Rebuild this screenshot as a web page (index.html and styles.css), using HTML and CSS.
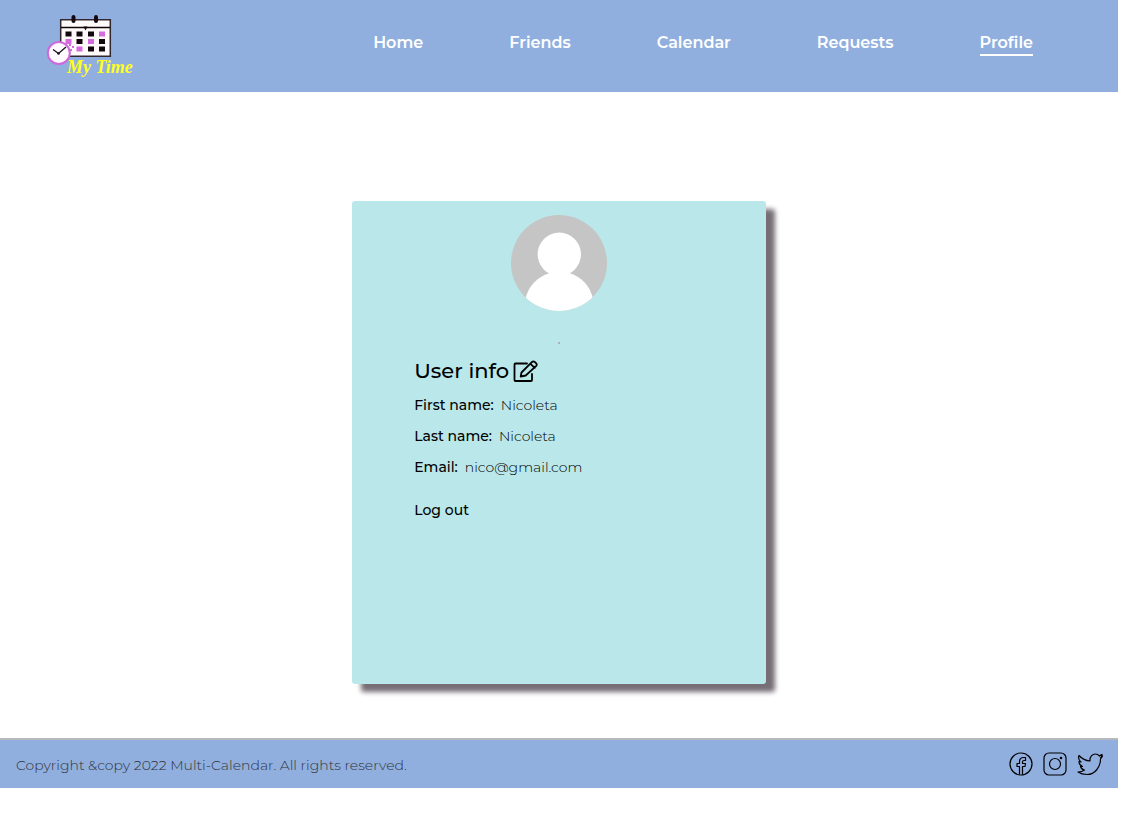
FILE: index.html
```html
<!DOCTYPE html>
<html lang="en">
<head>
<meta charset="utf-8">
<meta name="viewport" content="width=device-width, initial-scale=1">
<title>My Time - Profile</title>
<link rel="stylesheet" href="styles.css">
</head>
<body>
<header class="site-header">
  <a class="logo" href="#" aria-label="My Time">
    <svg width="88" height="68" viewBox="46 14 88 68">
      <path fill="#fffafa" stroke="#33272f" stroke-width="1.5" d="M60.7 19.7h49.6v36.6H60.7z"/>
      <path stroke="#100509" stroke-width="1.5" d="M61 27.5h49"/>
      <path fill="#100509" d="M83.500 26.500h4l-2 4z"/>
      <rect x="71.500" y="15" width="4" height="8" rx="2" fill="#160a10"/>
      <rect x="94" y="15" width="4" height="8" rx="2" fill="#160a10"/>
      <path fill="#12070c" d="M65.500 31.500h6v5h-6zM76.500 31.500h6v5h-6zM88 31.500h6v5h-6zM76.500 39h6v5h-6zM99 39h6v5h-6zM88 46.500h6v5h-6zM99 46.500h6v5h-6z"/>
      <path fill="#d66bdf" d="M99 31.500h6v5h-6zM65.500 39h6v5h-6zM88 39h6v5h-6zM76.500 46.500h6v5h-6zM69 44h2v2h-2zM72 46h2v2h-2zM70 49h2v2h-2z"/>
      <circle cx="58.800" cy="53" r="11" fill="#fffaff" stroke="#cc6adb" stroke-width="2"/>
      <path fill="none" stroke="#17101a" stroke-width="1.300" d="M53 49.500l5.500 4 7.500-6.500"/>
      <circle cx="58.500" cy="53.500" r="1.300" fill="#17101a"/>
      <text class="logo-text" x="67" y="73">My Time</text>
    </svg>
  </a>
  <nav class="nav">
    <a href="#">Home</a>
    <a href="#">Friends</a>
    <a href="#">Calendar</a>
    <a href="#">Requests</a>
    <a href="#" class="active" aria-current="page">Profile</a>
  </nav>
</header>
<main class="main">
  <section class="card">
    <svg class="avatar" viewBox="0 0 96 96" role="img" aria-label="Profile picture">
      <defs><clipPath id="round"><circle cx="48" cy="48" r="48"/></clipPath></defs>
      <g clip-path="url(#round)">
        <path fill="#c5c5c5" d="M0 0h96v96H0z"/>
        <circle cx="48.300" cy="39.300" r="21.700" fill="#fff"/>
        <path fill="#fff" d="M38.500 58C26 62 18 71 14.500 83v13h67.500V83C78.500 71 71 62 58.500 58z"/>
      </g>
    </svg>
    <hr class="dot">
    <div class="info">
      <h1 class="title">User info
        <button class="edit" type="button" aria-label="Edit user info">
          <svg width="26" height="22" viewBox="0 0 26 22" fill="none" stroke="#000" stroke-width="1.800" stroke-linejoin="round" stroke-linecap="round">
            <path d="M14 3.500H2.500Q1.500 3.500 1.500 4.500V20Q1.500 21 2.500 21H18Q19 21 19 20v-6"/>
            <path d="M8.500 12.500L18.800 2.200Q20.300.700 22 2.200l1 1Q24.500 4.700 23 6.200L12.700 15.500l-5 1zM17.500 3.800l4.200 4"/>
          </svg>
        </button>
      </h1>
      <dl class="details">
        <div class="row"><dt>First name:</dt><dd>Nicoleta</dd></div>
        <div class="row"><dt>Last name:</dt><dd>Nicoleta</dd></div>
        <div class="row"><dt>Email:</dt><dd>nico@gmail.com</dd></div>
      </dl>
      <button class="logout" type="button">Log out</button>
    </div>
  </section>
</main>
<footer class="footer">
  <p class="copyright">Copyright &amp;copy 2022 Multi-Calendar. All rights reserved.</p>
  <div class="social">
    <a href="#" aria-label="Facebook">
      <svg width="24" height="24" viewBox="0 0 24 24"><circle cx="12" cy="12" r="11"/><path d="M10.500 22.500V14.500H8v-3h2.500V9.500Q10.500 5.500 14.500 5.500H16.500v3H15Q13.500 8.500 13.500 10v1.500h3l-.5 3h-2.500v8"/></svg>
    </a>
    <a href="#" aria-label="Instagram">
      <svg width="24" height="24" viewBox="0 0 24 24"><rect x="1" y="1" width="22" height="22" rx="5"/><circle cx="12" cy="12" r="5.500"/><circle class="solid" cx="18" cy="6" r=".7"/></svg>
    </a>
    <a href="#" aria-label="Twitter">
      <svg width="26" height="24" viewBox="0 0 26 24"><path d="M2 3.500Q6.500 8.500 13 9C12.500 4.500 15.500 2 18.500 2Q20.800 2 22.300 3.800L25 2.500 24.300 4.500 25.500 4.200 23.500 7C23.500 15 18 22.500 10 22.500Q4.500 22.500 1 20Q5 20 7.500 18Q4.500 17.500 3.500 14.500H5.500Q2 13 2 9.500L4 10Q.500 7 2 3.500z"/><path d="M22 4l3-1M23 6l2-1"/></svg>
    </a>
  </div>
</footer>
</body>
</html>
```
FILE: styles.css
```css
* {
  box-sizing: border-box;
}

body {
  margin: 0 3px 0 0;
  background: #fff;
  color: #000;
  font-family: Montserrat, Inter, sans-serif;
  font-size: 14px;
  line-height: 20px;
}

a {
  color: inherit;
  text-decoration: none;
}

button {
  padding: 0;
  border: 0;
  background: none;
  color: inherit;
  font: inherit;
  cursor: pointer;
}

svg {
  display: block;
}

.site-header {
  display: flex;
  justify-content: space-between;
  align-items: flex-start;
  min-height: 92px;
  padding: 14px 85px 10px 46px;
  background: #90afdf;
}

.logo-text {
  fill: #ffff20;
  font-family: "Liberation Serif", serif;
  font-size: 18px;
  font-style: italic;
  font-weight: 700;
}

.nav {
  display: flex;
  gap: 86px;
  padding-top: 18px;
  color: #fff;
  font-size: 16px;
  font-weight: 600;
  line-height: 22px;
}

.nav a {
  border-bottom: 2px solid transparent;
}

.nav .active {
  border-bottom-color: #fff;
}

.main {
  padding: 109px 0 54px;
}

.card {
  width: 37%;
  min-width: 320px;
  min-height: 483px;
  margin: 0 auto;
  padding-top: 14px;
  border-radius: 3px;
  background: #bae7e9;
  box-shadow: 9px 8px 5px #756e75;
}

.avatar {
  width: 96px;
  height: 96px;
  margin: 0 auto;
}

.dot {
  width: 2px;
  height: 2px;
  margin: 31px auto 13px;
  border: 0;
  background: #a8b5b5;
}

.info {
  padding: 0 15%;
}

.title {
  display: flex;
  align-items: center;
  gap: 4px;
  margin: 0 0 10px;
  font-size: 21px;
  font-weight: 500;
  line-height: 28px;
}

.details {
  display: grid;
  gap: 11px;
  margin: 0 0 23px;
}

.row {
  display: flex;
  gap: 7px;
}

dt {
  font-weight: 500;
}

dd {
  margin: 0;
  font-weight: 300;
}

.logout {
  font-weight: 500;
}

.footer {
  display: flex;
  justify-content: space-between;
  align-items: center;
  min-height: 50px;
  padding: 0 15px 0 16px;
  border-top: 2px solid #b5b8bd;
  background: #90afdf;
}

.copyright {
  margin: 2px 0 0;
  color: #30343a;
  font-weight: 300;
}

.social {
  display: flex;
  gap: 10px;
}

.social svg {
  fill: none;
  stroke: #000;
  stroke-width: 1.2px;
  stroke-linejoin: round;
}

.social .solid {
  fill: #000;
}
```
